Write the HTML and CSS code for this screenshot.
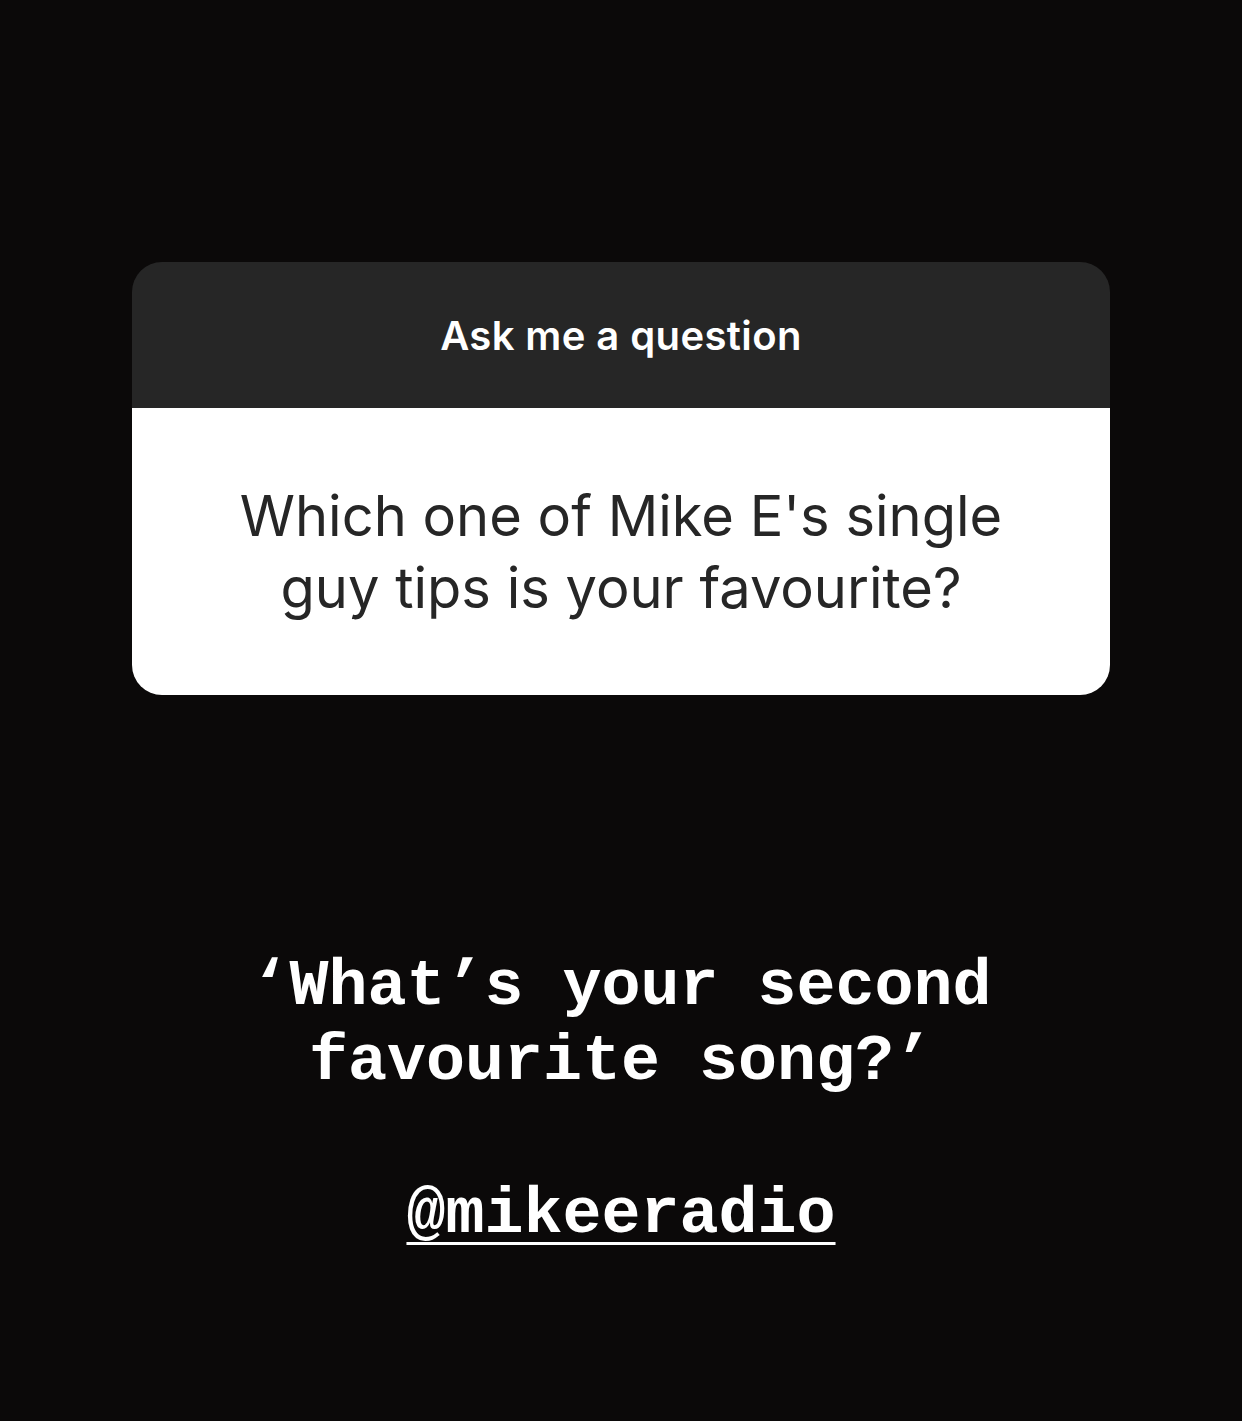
FILE: index.html
```html
<!DOCTYPE html>
<html lang="en">
<head>
    <meta charset="UTF-8">
    <meta name="viewport" content="width=device-width, initial-scale=1.0">
    <title>Ask me a question</title>
    <link rel="stylesheet" href="styles.css">
</head>
<body>

    <main class="story">
        <div class="question-card">
            <div class="card-header">Ask me a question</div>
            <div class="card-body">
                Which one of Mike E's single<br>guy tips is your favourite?
            </div>
        </div>

        <p class="caption">‘What’s your second<br>favourite song?’</p>

        <p class="mention">@mikeeradio</p>
    </main>

</body>
</html>
```

FILE: styles.css
```css
html, body {
    margin: 0;
    padding: 0;
    background-color: #0b0909;
}

body {
    width: 1242px;
    height: 1421px;
    overflow: hidden;
}

.story {
    display: flex;
    flex-direction: column;
    align-items: center;
    padding-top: 262px;
}

.question-card {
    width: 978px;
    border-radius: 30px;
    overflow: hidden;
    font-family: 'Inter', 'Liberation Sans', sans-serif;
}

.card-header {
    height: 146px;
    background-color: #262626;
    color: #ffffff;
    font-size: 40px;
    font-weight: 600;
    letter-spacing: 0.4px;
    display: flex;
    align-items: center;
    justify-content: center;
}

.card-body {
    height: 287px;
    background-color: #ffffff;
    color: #262626;
    font-size: 56px;
    line-height: 72px;
    text-align: center;
    display: flex;
    align-items: center;
    justify-content: center;
}

.caption, .mention {
    margin: 0;
    color: #ffffff;
    font-family: 'Liberation Mono', 'Courier New', monospace;
    font-size: 65px;
    font-weight: bold;
    line-height: 75px;
    text-align: center;
}

.caption {
    margin-top: 255px;
}

.mention {
    margin-top: 78px;
    text-decoration: underline;
    text-decoration-thickness: 3px;
    text-underline-offset: 10px;
}
```
